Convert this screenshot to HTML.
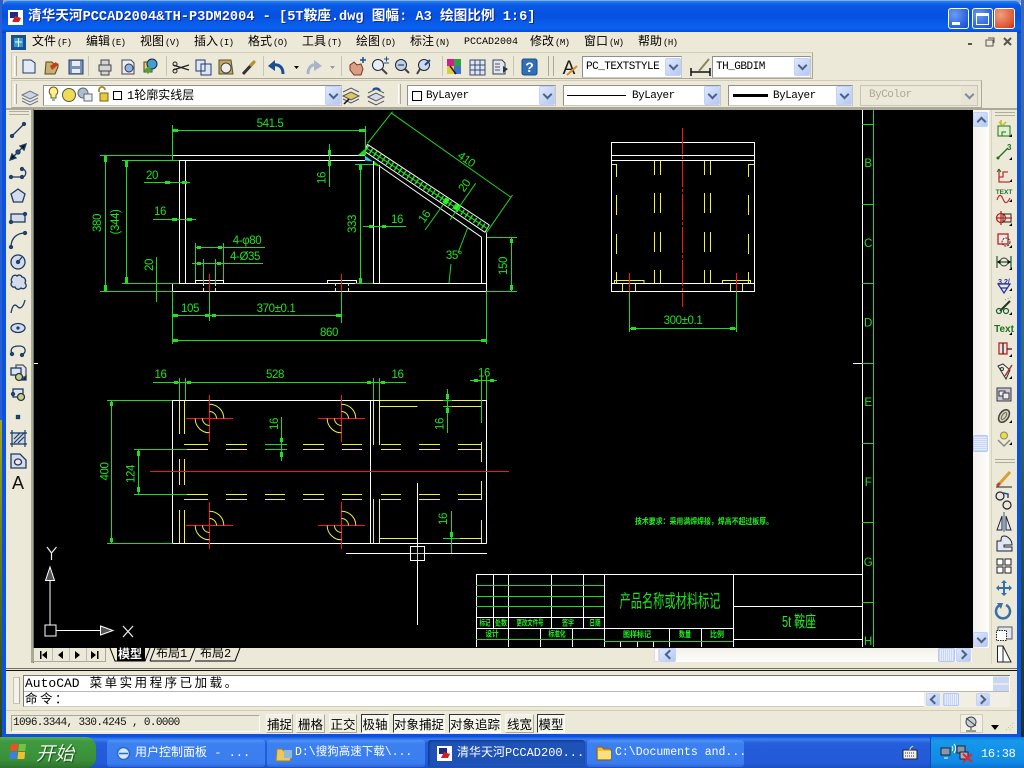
<!DOCTYPE html>
<html><head><meta charset="utf-8"><style>
html,body{margin:0;padding:0;background:#000}
#p{position:relative;width:1024px;height:768px;overflow:hidden;background:#ece9d8;font-family:"Liberation Sans","Noto Sans CJK SC",sans-serif;font-size:12px;color:#000}
#p div{position:absolute;box-sizing:border-box}
#p span.t{position:absolute;white-space:nowrap;line-height:1}
.m{top:36px;font-size:12px;font-family:"Liberation Mono","Noto Sans CJK SC",monospace}
.m i{font-style:normal;font-size:9px;letter-spacing:-.6px;margin-left:1px}
.bar{background:#ece9d8;border:1px solid #d0ccb8;border-right-color:#aca899;border-bottom-color:#aca899}
.cb{background:#fff;border:1px solid #8e8f8f;border-right-color:#c8c8c0;border-bottom-color:#c8c8c0}
.ar{background:linear-gradient(135deg,#dfe8fc,#b4c8f5);border:1px solid #c3d2f4;border-radius:2px}
.ar:after{content:"";position:absolute;left:50%;top:50%;width:5px;height:5px;margin:-5px 0 0 -3px;border-right:2px solid #4d6185;border-bottom:2px solid #4d6185;transform:rotate(45deg)}
.ar.u:after{transform:rotate(225deg);margin:-2px 0 0 -3px}
.ar.l:after{transform:rotate(135deg);margin:-4px 0 0 -2px}
.ar.rr:after{transform:rotate(-45deg);margin:-4px 0 0 -5px}
.th{background:repeating-linear-gradient(90deg,#c8d6f8 0,#c8d6f8 1px,#e4ecfd 1px,#e4ecfd 2px);border:1px solid #b4c8f0;border-radius:2px}
.sb{font-family:"Noto Sans CJK SC",sans-serif;font-size:12.5px;text-align:center;line-height:17px;height:19px;top:714px;background:#f2f0e4;border:1px solid #f8f7ef;border-right-color:#aca899;border-bottom-color:#aca899;letter-spacing:0;white-space:nowrap;overflow:hidden}
.on{background:#f7f6ee;border:1px solid #fff;border-top-color:#333;border-left-color:#333}
.tb{top:740px;height:27px;border-radius:3px;color:#fff;font-size:12px;line-height:26px;background:linear-gradient(180deg,#4e93f6 0,#3c80f0 15%,#3a7df0 85%,#2f66d8 100%);font-family:"Liberation Mono","Noto Sans CJK SC",monospace;white-space:nowrap}
</style></head><body><div id="p">

<!-- wallpaper edges -->
<div style="left:0;top:0;width:1024px;height:3px;background:#8fa8d8"></div>
<div style="left:0;top:0;width:3px;height:420px;background:#2a5fd0"></div>
<div style="left:0;top:420px;width:3px;height:320px;background:linear-gradient(180deg,#a0a820,#4a6a20 60%,#26401a)"></div>
<div style="left:1021px;top:0;width:3px;height:740px;background:linear-gradient(180deg,#3a6ab8,#3a6a60 50%,#20301a)"></div>

<!-- window -->
<div style="left:2px;top:1px;width:1019px;height:737px;background:#0a52e4;border-radius:7px 7px 0 0"></div>
<div style="left:2px;top:1px;width:1019px;height:32px;border-radius:7px 7px 0 0;background:linear-gradient(180deg,#1e86f5 0,#0a5be6 12%,#0550e0 45%,#0a62f0 85%,#0553e0 94%,#0342c8 100%)"></div>
<span class="t" style="left:28px;top:11px;font-size:13.65px;font-weight:bold;color:#fff;font-family:'Liberation Mono','Noto Sans CJK SC',monospace;text-shadow:1px 1px 0 #0a2a90">清华天河PCCAD2004&amp;TH-P3DM2004 - [5T鞍座.dwg 图幅: A3 绘图比例 1:6]</span>
<div style="left:6px;top:32px;width:1011px;height:702px;background:#ece9d8"></div>

<!-- title buttons -->
<div style="left:948px;top:8px;width:21px;height:21px;border:1px solid #fff;border-radius:3px;background:radial-gradient(circle at 30% 30%,#6a9cf5,#2a5fe0 70%,#1d47c0)"></div>
<div style="left:952px;top:22px;width:8px;height:3px;background:#fff"></div>
<div style="left:972px;top:8px;width:21px;height:21px;border:1px solid #fff;border-radius:3px;background:radial-gradient(circle at 30% 30%,#6a9cf5,#2a5fe0 70%,#1d47c0)"></div>
<div style="left:976px;top:13px;width:13px;height:12px;border:1px solid #fff;border-top-width:3px"></div>
<div style="left:994px;top:8px;width:21px;height:21px;border:1px solid #fff;border-radius:3px;background:radial-gradient(circle at 30% 30%,#f0a080,#de5530 70%,#b83010)"></div>

<!-- toolbars back -->
<div class="bar" style="left:11px;top:52px;width:802px;height:27px"></div>
<div class="bar" style="left:11px;top:80px;width:971px;height:28px"></div>
<div style="left:6px;top:108px;width:1011px;height:2px;background:#aca899"></div>

<!-- menu text -->
<span class="t m" style="left:32px">文件<i>(F)</i></span>
<span class="t m" style="left:86px">编辑<i>(E)</i></span>
<span class="t m" style="left:140px">视图<i>(V)</i></span>
<span class="t m" style="left:194px">插入<i>(I)</i></span>
<span class="t m" style="left:248px">格式<i>(O)</i></span>
<span class="t m" style="left:302px">工具<i>(T)</i></span>
<span class="t m" style="left:356px">绘图<i>(D)</i></span>
<span class="t m" style="left:410px">标注<i>(N)</i></span>
<span class="t m" style="left:464px;top:38px;font-size:10px">PCCAD2004</span>
<span class="t m" style="left:530px">修改<i>(M)</i></span>
<span class="t m" style="left:584px">窗口<i>(W)</i></span>
<span class="t m" style="left:638px">帮助<i>(H)</i></span>

<!-- combos -->
<div class="cb" style="left:582px;top:56px;width:100px;height:22px"></div>
<span class="t" style="left:586px;top:62px;font-family:'Liberation Mono',monospace;font-size:11px;letter-spacing:-.5px">PC_TEXTSTYLE</span>
<div class="ar" style="left:665px;top:58px;width:16px;height:18px"></div>
<div class="cb" style="left:712px;top:56px;width:99px;height:22px"></div>
<span class="t" style="left:716px;top:62px;font-family:'Liberation Mono',monospace;font-size:11px;letter-spacing:-.5px">TH_GBDIM</span>
<div class="ar" style="left:794px;top:58px;width:16px;height:18px"></div>

<div class="cb" style="left:43px;top:85px;width:299px;height:21px"></div>
<span class="t" style="left:127px;top:90px;font-size:12px;font-family:'Liberation Mono','Noto Sans CJK SC',monospace">1轮廓实线层</span>
<div class="ar" style="left:325px;top:86px;width:16px;height:19px"></div>
<div class="cb" style="left:407px;top:85px;width:149px;height:21px"></div>
<span class="t" style="left:426px;top:91px;font-family:'Liberation Mono',monospace;font-size:11px;letter-spacing:-.5px">ByLayer</span>
<div class="ar" style="left:539px;top:86px;width:16px;height:19px"></div>
<div class="cb" style="left:563px;top:85px;width:158px;height:21px"></div>
<div style="left:567px;top:95px;width:59px;height:1px;background:#000"></div>
<span class="t" style="left:632px;top:91px;font-family:'Liberation Mono',monospace;font-size:11px;letter-spacing:-.5px">ByLayer</span>
<div class="ar" style="left:704px;top:86px;width:16px;height:19px"></div>
<div class="cb" style="left:728px;top:85px;width:125px;height:21px"></div>
<div style="left:733px;top:94px;width:35px;height:3px;background:#000"></div>
<span class="t" style="left:773px;top:91px;font-family:'Liberation Mono',monospace;font-size:11px;letter-spacing:-.5px">ByLayer</span>
<div class="ar" style="left:836px;top:86px;width:16px;height:19px"></div>
<div style="left:860px;top:85px;width:118px;height:21px;border:1px solid #c8c5b4;background:#ece9d8"></div>
<span class="t" style="left:869px;top:90px;font-family:'Liberation Mono',monospace;font-size:11px;letter-spacing:-.5px;color:#aca899">ByColor</span>
<div class="ar" style="left:961px;top:86px;width:16px;height:19px;background:#e6e3d4;border-color:#e6e3d4;opacity:.7"></div>

<!-- canvas -->
<div style="left:34px;top:110px;width:939px;height:538px;background:#000"></div>
<div style="left:31px;top:109px;width:3px;height:554px;background:#aca899;border-right:1px solid #716f64"></div>
<!-- v scrollbar -->
<div style="left:973px;top:110px;width:16px;height:538px;background:linear-gradient(90deg,#f3f1ea,#fdfdfb)"></div>
<div class="ar u" style="left:973px;top:112px;width:15px;height:15px"></div>
<div class="ar" style="left:973px;top:632px;width:15px;height:15px"></div>
<div class="th" style="left:973px;top:435px;width:15px;height:17px;background:repeating-linear-gradient(180deg,#c8d6f8 0,#c8d6f8 1px,#e4ecfd 1px,#e4ecfd 2px)"></div>
<div style="left:991px;top:110px;width:1px;height:554px;background:#d6d3c2"></div>
<!-- h scrollbar -->
<div style="left:654px;top:648px;width:318px;height:14px;background:linear-gradient(180deg,#f3f1ea,#fdfdfb)"></div>
<div class="ar l" style="left:659px;top:648px;width:17px;height:14px"></div>
<div style="left:654px;top:648px;width:5px;height:14px;background:#fbfaf5;border:1px solid #ddd"></div>
<div class="th" style="left:938px;top:648px;width:17px;height:14px"></div>
<div class="ar rr" style="left:956px;top:648px;width:15px;height:14px"></div>
<!-- nav -->
<div style="left:33px;top:648px;width:73px;height:14px;background:#ece9d8;border:1px solid #aca899;border-top:0"></div>

<!-- tabs text -->
<span class="t" style="left:117px;top:648px;font-size:12px;font-weight:bold;color:#fff;background:#000;padding:0 3px 1px 1px;font-family:'Noto Sans CJK SC',sans-serif">模型</span>
<span class="t" style="left:156px;top:648px;font-size:12px;font-family:'Liberation Mono','Noto Sans CJK SC',monospace">布局1</span>
<span class="t" style="left:200px;top:648px;font-size:12px;font-family:'Liberation Mono','Noto Sans CJK SC',monospace">布局2</span>

<!-- command -->
<div style="left:6px;top:668px;width:1011px;height:3px;border-top:1px solid #716f64;border-bottom:1px solid #111"></div>
<div style="left:6px;top:671px;width:1011px;height:39px;background:#ece9d8"></div>
<div style="left:13px;top:677px;width:7px;height:27px;border:1px solid #c8c5b4;border-right-color:#aca899;background:#f5f3e8"></div>
<div style="left:23px;top:675px;width:987px;height:32px;background:#fff;border:1px solid #777;border-right:0;border-bottom:1px solid #d0ccb8"></div>
<div style="left:24px;top:691px;width:985px;height:1px;background:#b8b8b0"></div>
<span class="t" style="left:25px;top:677px;font-size:13px;font-family:'Liberation Mono','Noto Sans CJK SC',monospace">AutoCAD<span style="margin-left:10px;font-size:12.5px;letter-spacing:2.5px">菜单实用程序已加载。</span></span>
<span class="t" style="left:25px;top:694px;font-size:12.5px;letter-spacing:2.5px;font-family:'Liberation Mono','Noto Sans CJK SC',monospace">命令：</span>
<div style="left:993px;top:676px;width:16px;height:15px;background:#ece9d8"></div>
<div style="left:993px;top:677px;width:16px;height:6px;background:#c8d6f8"></div>
<div style="left:993px;top:685px;width:16px;height:6px;background:#c8d6f8"></div>
<div style="left:924px;top:692px;width:86px;height:15px;background:#f1efe4"></div>
<div class="ar l" style="left:926px;top:693px;width:14px;height:13px"></div>
<div class="th" style="left:943px;top:693px;width:16px;height:13px"></div>
<div class="ar rr" style="left:976px;top:693px;width:14px;height:13px"></div>

<!-- status -->
<div style="left:6px;top:710px;width:1011px;height:24px;background:#ece9d8;border-top:1px solid #d0ccb8"></div>
<div style="left:11px;top:715px;width:249px;height:17px;background:#ece9d8;border:1px solid #aca899;border-right-color:#fff;border-bottom-color:#fff"></div>
<span class="t" style="left:13px;top:718px;font-size:11px;font-family:'Liberation Mono',monospace;letter-spacing:-.65px;color:#111">1096.3344, 330.4245 , 0.0000</span>
<div class="sb" style="left:266px;width:27px">捕捉</div>
<div class="sb" style="left:296px;width:29px">栅格</div>
<div class="sb" style="left:329px;width:28px">正交</div>
<div class="sb on" style="left:361px;width:28px">极轴</div>
<div class="sb on" style="left:393px;width:52px">对象捕捉</div>
<div class="sb on" style="left:449px;width:52px">对象追踪</div>
<div class="sb" style="left:505px;width:29px">线宽</div>
<div class="sb on" style="left:537px;width:28px">模型</div>
<div style="left:960px;top:714px;width:23px;height:19px;background:#f3f1e6;border:1px solid #d0ccb8"></div>
<div style="left:991px;top:725px;width:0;height:0;border:4px solid transparent;border-top:5px solid #000"></div>

<!-- taskbar -->
<div style="left:0;top:737px;width:1024px;height:31px;background:linear-gradient(180deg,#1f5ad8 0,#3c80ef 8%,#245edb 20%,#2359d6 85%,#1c4fc0 100%)"></div>
<div style="left:0;top:737px;width:96px;height:31px;border-radius:0 10px 10px 0;background:linear-gradient(180deg,#5aa85a 0,#3f9a3f 15%,#3a8f3a 75%,#2d722d 100%)"></div>
<span class="t" style="left:36px;top:743px;font-size:19px;font-style:italic;color:#e8f4e8;font-family:'Noto Sans CJK SC',sans-serif;text-shadow:1px 1px 1px #1c4c1c">开始</span>
<div class="tb" style="left:107px;width:158px;padding-left:28px">用户控制面板 - ...</div>
<div class="tb" style="left:267px;width:158px;padding-left:28px;font-size:11.5px">D:\搜狗高速下载\...</div>
<div class="tb" style="left:428px;width:157px;padding-left:29px;background:#1e52b7;box-shadow:inset 1px 1px 2px #12367f">清华天河PCCAD200...</div>
<div class="tb" style="left:587px;width:157px;padding-left:28px;font-size:11.5px">C:\Documents and...</div>
<div style="left:930px;top:737px;width:94px;height:31px;background:linear-gradient(180deg,#0f7fdc 0,#1798ea 12%,#0f8ae6 80%,#0d70cf 100%);border-left:1px solid #0a4aa8"></div>
<span class="t" style="left:981px;top:748px;font-size:12px;color:#fff;font-family:'Liberation Mono',monospace;letter-spacing:-.3px">16:38</span>

<svg width="1024" height="768" viewBox="0 0 1024 768" style="position:absolute;left:0;top:0" fill="none">
<style>
.d{font-family:"Liberation Sans","Noto Sans CJK SC",sans-serif;font-size:11.5px;letter-spacing:-.4px;fill:#20e020;text-anchor:middle;dominant-baseline:central}
.s{font-family:"Noto Sans CJK SC",sans-serif;font-size:8px;font-weight:bold;fill:#20f020;text-anchor:middle;dominant-baseline:central}
.w{stroke:#fff;stroke-width:1;shape-rendering:crispEdges}
.g{stroke:#20d820;stroke-width:1;shape-rendering:crispEdges}
.y{stroke:#f0f040;stroke-width:1;shape-rendering:crispEdges}
.r{stroke:#ff1414;stroke-width:1;shape-rendering:crispEdges}
.a{stroke:#20e020;stroke-width:3;shape-rendering:crispEdges}
.i{stroke:#1c3c64;stroke-width:1.3}
.n{stroke:#1c3c64;fill:#d4dcec}
.dot{fill:#1c5080}
</style>

<!-- ===== CAD: FRONT VIEW ===== -->
<path class="w" d="M172.5 155.5H365M172.5 160.5H365M179.5 160V283M185.5 160V283M172.5 283.5H486.5M172.5 291.5H486.5M172.5 283V291.5M486.5 232V291.5M481.5 237V283M373.5 161V283M379.5 165V283M195.5 280.5H223.5M195.5 280V283M223.5 280V283M327.5 280.5H356.5M327.5 280V283M356.5 280V283"/>
<path stroke="#fff" d="M367.3 144.3L489.3 225M365 151.7L485 232.3M374 162.3L481.7 237.3M367.3 144.3L365 151.7M489.3 225L485 232.3"/>
<path stroke="#22e022" stroke-width="6" stroke-dasharray="1.5 3.5" d="M366.2 148L487.2 228.6"/>
<path stroke="#22e022" stroke-width="1" d="M366.2 148L487.2 228.6"/>
<path stroke="#22ff22" stroke-width="6" d="M444 199.7L448 202.4M455.3 206.3L459.3 209"/>
<path fill="#20d8f0" d="M365 155.5L373 161.5L365 160.5Z"/>
<path fill="#20d820" d="M357.3 155.5L365 149L365 155.5Z"/>
<path fill="#20d820" d="M374 161L381 167L374 165Z"/>
<path class="y" stroke-dasharray="3 2" d="M203.5 283V291M215.5 283V291M335.5 283V291M348.5 283V291"/>
<path class="r" d="M209.5 274V291M341.5 274V291"/>
<path class="g" d="M172.5 125V160M365.5 126V155M172.5 130.5H365M100 155.5H172M105.5 155.5V291M100 291.5H172M122 160.5H179M126.5 160.5V283M122 283.5H179M144 182.5H190M153 219.5H196M195.5 243V280M223.5 243V280M195 247.5H265M192 263.5H263M203.5 259V283M215.5 259V283M156.5 257V302M172.5 291V344M209.5 291V321M341.5 291V323M486.5 291V344M172.5 315.5H341.5M172.5 340.5H486.5M360.5 164V283M355 164.5H373M355 283.5H373M363 226.5H406M329.5 144V187M511.5 237V291M487 237.5H517M487 291.5H517"/>
<path stroke="#20d820" d="M391.7 113.3L510.5 197M367.5 143.3L392.5 111.7M486 233.3L512.5 195M450 220L475.7 183.3M425 230L443 205M468 227L458 253M451 264L449 283"/>
<path class="a" d="M172 130.5h6M359 130.5h6M105.5 156v6M105.5 285v6M126.5 161v6M126.5 277v6M165 182.5h5M182 182.5h5M172 219.5h5M187 219.5h5M197 247.5h4M218 247.5h4M197 263.5h4M217 263.5h4M173 315.5h5M205 315.5h4M212 315.5h4M336 315.5h5M173 340.5h5M481 340.5h5M360.5 165v5M360.5 278v5M369 226.5h4M382 226.5h4M329.5 150v5M329.5 161v5M511.5 239v4M511.5 285v5"/>
<text class="d" x="270" y="124">541.5</text>
<text class="d" transform="rotate(-90 98 223)" x="98" y="223">380</text>
<text class="d" transform="rotate(-90 116 222)" x="116" y="222">(344)</text>
<text class="d" x="152" y="176">20</text>
<text class="d" x="160" y="212">16</text>
<text class="d" x="247" y="241">4-φ80</text>
<text class="d" x="245" y="257">4-Ø35</text>
<text class="d" transform="rotate(-90 150 265)" x="150" y="265">20</text>
<text class="d" x="190" y="309">105</text>
<text class="d" x="276" y="309">370±0.1</text>
<text class="d" x="329" y="333">860</text>
<text class="d" transform="rotate(-90 353 224)" x="353" y="224">333</text>
<text class="d" x="397" y="220">16</text>
<text class="d" transform="rotate(-90 322.5 178)" x="322.5" y="178">16</text>
<text class="d" transform="rotate(-90 504 266)" x="504" y="266">150</text>
<text class="d" transform="rotate(35 466 160)" x="466" y="160">410</text>
<text class="d" transform="rotate(-55 465 186)" x="465" y="186">20</text>
<text class="d" transform="rotate(-55 425 217)" x="425" y="217">16</text>
<text class="d" x="454" y="256">35°</text>

<!-- ===== CAD: TOP VIEW ===== -->
<path class="w" d="M172.5 400.5H486.5M172.5 543.5H486.5M172.5 400V543.5M486.5 400V543.5M370.5 400V543.5"/>
<path class="y" d="M179.5 401V434M184.5 401V434M179.5 459V485M184.5 459V485M179.5 510V543M184.5 510V543M373.5 401V445M379.5 401V445M373.5 499V543M379.5 499V543M481.5 401V423M481.5 442V462M481.5 481V500M481.5 520V543M380 400.5H481M380 406.5H417.5M452 406.5H481.5M380 538.5H417M452 538.5H481.5"/>
<path class="y" d="M184 444.5H208M184 449.5H208M226 444.5H247M226 449.5H247M265 444.5H285M265 449.5H285M303 444.5H324M303 449.5H324M342 444.5H362M342 449.5H362M381 444.5H401M381 449.5H401M419 444.5H440M419 449.5H440M458 444.5H481.5M458 449.5H481.5M184 494.5H208M184 499.5H208M226 494.5H247M226 499.5H247M265 494.5H285M265 499.5H285M303 494.5H324M303 499.5H324M342 494.5H362M342 499.5H362M381 494.5H401M381 499.5H401M419 494.5H440M419 499.5H440M458 494.5H481.5M458 499.5H481.5"/>
<path class="r" d="M150 471.5H509M186 418.5H233M209.5 395V442M318 418.5H365M341.5 395V442M186 525.5H233M209.5 502V549M318 525.5H365M341.5 502V549"/>
<path stroke="#f0f040" d="M209.5 404.2A14.3 14.3 0 0 1 223.8 418.5M209.5 411.5A7 7 0 0 1 216.5 418.5M195.2 418.5A14.3 14.3 0 0 0 209.5 432.8M202.5 418.5A7 7 0 0 0 209.5 425.5M341.5 404.2A14.3 14.3 0 0 1 355.8 418.5M341.5 411.5A7 7 0 0 1 348.5 418.5M327.2 418.5A14.3 14.3 0 0 0 341.5 432.8M334.5 418.5A7 7 0 0 0 341.5 425.5M209.5 511.2A14.3 14.3 0 0 1 223.8 525.5M209.5 518.5A7 7 0 0 1 216.5 525.5M195.2 525.5A14.3 14.3 0 0 0 209.5 539.8M202.5 525.5A7 7 0 0 0 209.5 532.5M341.5 511.2A14.3 14.3 0 0 1 355.8 525.5M341.5 518.5A7 7 0 0 1 348.5 525.5M327.2 525.5A14.3 14.3 0 0 0 341.5 539.8M334.5 525.5A7 7 0 0 0 341.5 532.5"/>
<path class="g" d="M153 382.5H406M179.5 378V400M185.5 378V400M373.5 378V400M379.5 378V400M470 380.5H497M481.5 376V423M486.5 376V400M107 400.5H172M111.5 400.5V543M107 543.5H172M134 449.5H187M138.5 449.5V494M134 494.5H187M281.5 417V461M447.5 389V433M451.5 511V554M443 538.5H460M265 444.5H287M265 449.5H287M443 406.5H452M443 400.5H452"/>
<path class="a" d="M174 382.5h4M187 382.5h4M367 382.5h4M381 382.5h4M474 380.5h4M490 380.5h4M111.5 402v4M111.5 538v4M138.5 451v5M138.5 487v5M281.5 438v4M281.5 452v5M447.5 394v5M447.5 408v5M451.5 532v5"/>
<text class="d" x="160.5" y="375">16</text>
<text class="d" x="275" y="375">528</text>
<text class="d" x="397.5" y="375">16</text>
<text class="d" x="484" y="373.5">16</text>
<text class="d" transform="rotate(-90 105.5 471.5)" x="105.5" y="471.5">400</text>
<text class="d" transform="rotate(-90 131.5 474)" x="131.5" y="474">124</text>
<text class="d" transform="rotate(-90 275 424)" x="275" y="424">16</text>
<text class="d" transform="rotate(-90 440.5 424)" x="440.5" y="424">16</text>
<text class="d" transform="rotate(-90 444 519)" x="444" y="519">16</text>

<!-- crosshair -->
<path class="w" d="M417.5 483V546M417.5 561V625M346 553.5H410M425 553.5H487M410.5 546.5H424.5V560.5H410.5ZM34 363.5H38M853 363.5H862"/>
<path class="w" d="M417.5 546V561M410 553.5H425" opacity=".8"/>

<!-- ===== CAD: SIDE VIEW ===== -->
<path class="w" d="M611.5 142.5H754.5V291.5H611.5ZM611.5 155.5H754.5M611.5 160.5H754.5M611.5 283.5H754.5"/>
<path class="y" d="M654.5 161V175M660.5 161V175M704.5 161V175M710.5 161V175M654.5 193V213M660.5 193V213M704.5 193V213M710.5 193V213M654.5 232V252M660.5 232V252M704.5 232V252M710.5 232V252M654.5 270V283M660.5 270V283M704.5 270V283M710.5 270V283M611.5 164.5H616.5V177M616.5 195V215M616.5 234V254M616.5 272V283M754.5 164.5H748.5V177M748.5 195V215M748.5 234V254M748.5 272V283M614.5 283V280.5H644V283M722.5 283V280.5H750.5V283M622.5 283V291M635.5 283V291M730.5 283V291M742.5 283V291"/>
<path class="r" stroke-dasharray="26 2 3 2" d="M682.5 128V307"/>
<path class="r" d="M629.5 273V291M736.5 273V291"/>
<path class="g" d="M629.5 291V332M736.5 291V332M629.5 328.5H736.5"/>
<path class="a" d="M631 328.5h5M730 328.5h5"/>
<text class="d" x="683" y="321">300±0.1</text>

<!-- ===== BORDER ===== -->
<path class="w" d="M862.5 110V647"/>
<path class="g" d="M873.5 110V647M862 124.5H874M862 204.5H874M862 283.5H874M862 363.5H874M862 443.5H874M862 522.5H874M862 602.5H874"/>
<text class="d" x="868" y="164">B</text><text class="d" x="868" y="244">C</text><text class="d" x="868" y="323.5">D</text><text class="d" x="868" y="403">E</text><text class="d" x="868" y="483">F</text><text class="d" x="868" y="563">G</text><text class="d" x="868" y="642">H</text>

<!-- ===== TITLE BLOCK ===== -->
<path class="w" d="M476.5 574.5H862M476.5 574V647M493.5 574V628M508.5 574V647M551.5 574V617M583.5 574V628M604.5 574V647M733.5 574V647M476 617.5H604M476 628.5H733M733 606.5H862M733 639.5H862M540.5 628V647M572.5 628V647M551.5 617V628M669.5 628V647M701.5 628V647"/>
<path class="g" d="M476 585.5H604M476 596.5H604M476 606.5H604M476 639.5H604M604 641.5H733"/>
<path class="w" d="M620.5 642V647M637.5 642V647M653.5 642V647"/>
<text x="670" y="601.5" class="d" style="font-size:18px;letter-spacing:0" textLength="101" lengthAdjust="spacingAndGlyphs">产品名称或材料标记</text>
<text x="799" y="622.5" class="d" style="font-size:16px;letter-spacing:0;fill:#22f022" textLength="34" lengthAdjust="spacingAndGlyphs">5t 鞍座</text>
<text x="704" y="521.5" class="s" textLength="138" lengthAdjust="spacingAndGlyphs">技术要求：采用满焊焊接，焊高不超过板厚。</text>
<text class="s" x="485" y="623" textLength="11" lengthAdjust="spacingAndGlyphs">标记</text>
<text class="s" x="501" y="623" textLength="12" lengthAdjust="spacingAndGlyphs">处数</text>
<text class="s" x="530" y="623" textLength="27" lengthAdjust="spacingAndGlyphs">更改文件号</text>
<text class="s" x="568" y="623" textLength="12" lengthAdjust="spacingAndGlyphs">签字</text>
<text class="s" x="595" y="623" textLength="11" lengthAdjust="spacingAndGlyphs">日期</text>
<text class="s" x="492" y="634" textLength="13" lengthAdjust="spacingAndGlyphs">设计</text>
<text class="s" x="557" y="634" textLength="17" lengthAdjust="spacingAndGlyphs">标准化</text>
<text class="s" x="637" y="634.5" textLength="28" lengthAdjust="spacingAndGlyphs">图样标记</text>
<text class="s" x="685" y="634.5" textLength="12" lengthAdjust="spacingAndGlyphs">数量</text>
<text class="s" x="717" y="634.5" textLength="14" lengthAdjust="spacingAndGlyphs">比例</text>

<!-- UCS -->
<path stroke="#fff" d="M45 625.5V625h11v11H45ZM50 625V581M56 630.5H100"/>
<path stroke="#fff" d="M45.5 580.5H54.5L50 567ZM100.5 626V635L113 630.5Z" fill="#555"/>
<path stroke="#eee" stroke-width="1.2" d="M47 547L51.500 553L56.500 547M51.500 553V560M123 626L133 637M133 626L123 637"/>

<!-- nav glyphs -->
<g fill="#000"><path d="M40 651h1.500v8H40ZM47 651v8l-5-4ZM63 651v8l-5-4ZM75 651v8l5-4ZM91 651v8l5-4ZM97 651h1.500v8H97Z"/><path stroke="#bbb" d="M52.500 648V662M69.500 648V662M86.500 648V662" fill="none"/></g>
<!-- tabs outline -->
<path stroke="#000" d="M110 648L115 661H145L150 648M150 661L155 648M190 661H155M190 661L195 648M195 661H235L240 648M150 661H155"/>

<!-- MENU ICON -->
<rect x="11" y="35" width="15" height="15" fill="#1b4f8e"/><path d="M14 38h9v9h-9z" fill="#2f9fd8"/><path stroke="#fff" d="M18.500 38v9M15 42h7"/>
<!-- MDI -->
<path stroke="#555" d="M968 44h4" stroke-width="2"/><path stroke="#555" d="M986 40h7v6h-7zM988 38h6v5" fill="none"/><path stroke="#555" stroke-width="2" d="M1004 38l7 7M1011 38l-7 7"/>

<!-- TITLE ICON -->
<rect x="8" y="10" width="15" height="15" fill="#fff"/><path d="M10 12h8v6h-8z" fill="#222a80"/><path d="M15 16l6 2-2 4h-7z" fill="#d02020"/><path stroke="#fff" d="M12 18v5"/>
<!-- grips -->
<path stroke="#fff" d="M14.500 56V76M14.500 84V104M341 84M398.500 84V104"/><path stroke="#aca899" d="M16.500 56V76M16.500 84V104M400.500 84V104M548.500 56V76M553.500 56V76"/>
<path stroke="#c8c5b4" d="M88.500 56V76M166.500 56V76M263.500 56V76M341.500 56V76M442.500 56V76M513.500 56V76"/>

<!-- TOOLBAR 1 ICONS -->
<path fill="#e4eaf5" stroke="#1f3c6a" d="M23 60H31L35 63V73H23Z"/>
<path fill="#c8b070" stroke="#5a4a20" d="M46 62h6l2 2h4v3l-3 7H45Z"/><path fill="#c04020" d="M50 66l6-4 2 3-6 5z"/>
<path fill="#7a92b8" stroke="#1f3c6a" d="M69 60h14v14H69Z"/><path fill="#e8ecf4" d="M72 61h8v5h-8zM72 69h8v4h-8z"/>
<path fill="#d4d4d8" stroke="#444" d="M99 65h12v6H99ZM101 60h8v5h-8zM101 71h8v4h-8z"/>
<path fill="#eee" stroke="#445" d="M122 60h9l3 3v11h-12Z"/><circle cx="129" cy="68" r="4" fill="#8fb4e0" stroke="#335"/>
<path fill="#e8d060" stroke="#443" d="M144 62h8v10h-8z"/><circle cx="152" cy="64" r="5" fill="#3fa0d0" stroke="#224"/><path fill="#50a040" d="M144 70l5-4 3 4-4 4z"/>
<path stroke="#222" stroke-width="1.200" d="M173 65L189 70M173 70L189 65"/><circle cx="175" cy="64" r="2" stroke="#222"/><circle cx="175" cy="71" r="2" stroke="#222"/>
<path fill="#dce6f5" stroke="#1f3c6a" d="M196 60h9v11h-9zM201 64h10v11h-10z"/>
<path fill="#c8a858" stroke="#553" d="M219 60h12l2 14h-14z"/><circle cx="226" cy="68" r="5" fill="#eee" stroke="#444"/>
<path stroke="#333" stroke-width="3" d="M243 74L254 62"/><path stroke="#c09030" stroke-width="3" d="M250 66l5-5"/>
<path stroke="#1c4d90" stroke-width="3" d="M283 74C283 66 278 64 272 65"/><path fill="#1c4d90" d="M275 60L268 66L275 71Z"/>
<path fill="#000" d="M294 66h5l-2.500 3z"/>
<path stroke="#aab4c8" stroke-width="3" d="M308 74C308 66 313 64 317 65"/><path fill="#aab4c8" d="M314 60L322 66L314 71Z"/><path fill="#999" d="M330 66h5l-2.500 3z"/>
<path fill="#d8a080" stroke="#733" d="M350 65l4-3 3 3 4-1 2 5-2 6h-7l-4-5z"/><path stroke="#1c4d90" stroke-width="1.500" d="M360 60h6M363 57v6"/>
<circle cx="378" cy="65" r="5.500" stroke="#223" fill="#e8eef8"/><path stroke="#444" stroke-width="2" d="M382 69l5 5"/><path stroke="#1c4d90" d="M384 59h5M386.500 56.500v5M384 63h5"/>
<circle cx="401" cy="65" r="5.500" stroke="#223" fill="#bcd0ee"/><path stroke="#444" stroke-width="2" d="M405 69l4 4"/><path stroke="#223" d="M398 65h6"/>
<circle cx="424" cy="65" r="5.500" stroke="#223" fill="#cddaf0"/><path stroke="#444" stroke-width="2" d="M420 69l-3 5"/><path stroke="#1c4d90" stroke-width="2" d="M430 60l-5 5"/>
<rect x="447" y="59" width="7" height="7" fill="#d02090"/><rect x="454" y="59" width="7" height="7" fill="#30a040"/><rect x="447" y="66" width="7" height="8" fill="#dccc40"/><rect x="454" y="66" width="7" height="8" fill="#4070d0"/><path stroke="#222" stroke-width="1.500" d="M450 66L456 74"/>
<rect x="470" y="60" width="15" height="15" fill="#dfe6f2" stroke="#3a4a70"/><path stroke="#3a4a70" d="M475 60V75M480 60V75M470 65H485M470 70H485"/>
<path fill="#dfe6f2" stroke="#345" d="M493 60h9l3 3v11h-12Z"/><path fill="#334" d="M503 66l5 3-5 4z"/><path stroke="#555" d="M495 64h5M495 67h5M495 70h5"/>
<rect x="522" y="59" width="15" height="16" rx="2" fill="#2f6fb5" stroke="#224a80"/><text x="529.500" y="72" font-family="Liberation Sans" font-size="14" font-weight="bold" fill="#fff" text-anchor="middle">?</text>
<text x="569" y="74" font-family="Liberation Sans" font-size="19" fill="#1a1a1a" text-anchor="middle">A</text><path stroke="#d09030" stroke-width="2" d="M567 75l10-9"/>
<path stroke="#111" stroke-width="1.500" d="M691 72H710M691 68V76M710 68V76"/><path stroke="#885" stroke-width="2" d="M699 71L709 59"/>

<!-- TOOLBAR 2 ICONS -->
<g stroke="#6a7890" fill="#ccd4e2"><path d="M22 95l8-4 8 4-8 4z"/><path d="M22 98l8 4 8-4" fill="none"/><path d="M22 101l8 4 8-4" fill="none"/></g>
<path fill="#ffee88" stroke="#5a5a20" d="M53 87a4.500 4.500 0 0 1 3 8v3h-5v-3a4.500 4.500 0 0 1 2-8z"/><path stroke="#555" d="M52 100h3"/>
<circle cx="69" cy="95" r="6.500" fill="#eedd50" stroke="#555"/>
<circle cx="83" cy="93" r="5" fill="#a8c0c8" stroke="#667"/><rect x="84" y="94" width="8" height="7" fill="#e8ecf0" stroke="#667"/>
<path stroke="#a8861e" stroke-width="1.800" d="M99 92v-2a3 3 0 0 1 6 0"/><rect x="100" y="93" width="8" height="8" fill="#e8c840" stroke="#7a6010"/>
<rect x="113.500" y="91.500" width="8" height="8" fill="#fff" stroke="#000"/>
<g transform="translate(351 95)"><path fill="#dcc860" stroke="#556" d="M-8 1l8-4 8 4-8 4z"/><path stroke="#556" d="M-8-3l8-4 8 4M-8 4l8 4 8-4"/><path stroke="#111" stroke-width="1.500" d="M-7 9l5-5"/></g>
<g transform="translate(376 95)"><path fill="#d4dae6" stroke="#556" d="M-8 2l8-4 8 4-8 4z"/><path stroke="#556" d="M-8-2l8-4 8 4M-8 6l8 4 8-4"/><path stroke="#1c4d90" stroke-width="2" d="M-3-5a4 4 0 0 1 7 1"/></g>
<rect x="412.500" y="91.500" width="9" height="9" fill="#fff" stroke="#000"/>

<!-- LEFT TOOLBAR -->
<path stroke="#b0ad9c" d="M9 111.500H29M9 114.500H29"/>
<g class="i">
<path class="i" d="M12 136L24 124"/><circle class="dot" cx="12" cy="136" r="1.500"/><circle class="dot" cx="24" cy="124" r="1.500"/>
<path class="i" stroke-width="1.500" d="M10 160L26 144"/><path fill="#111" d="M10 160l6-2-4-4zM26 144l-6 2 4 4z"/><circle class="dot" cx="18" cy="152" r="2"/>
<path class="i" d="M11 177H22C27 177 27 169 22 169"/><circle class="dot" cx="11" cy="177" r="1.500"/><circle class="dot" cx="22" cy="177" r="1.500"/><circle class="dot" cx="22" cy="169" r="1.500"/>
<path class="n" stroke-width="1.300" d="M18 189L25 194L22.500 202H13.500L11 194Z"/>
<rect class="n" x="11" y="214" width="14" height="8"/><circle class="dot" cx="11" cy="222" r="1.500"/><circle class="dot" cx="25" cy="214" r="1.500"/>
<path class="i" d="M11 247C11 238 17 233 25 233"/><circle class="dot" cx="11" cy="247" r="1.500"/><circle class="dot" cx="25" cy="233" r="1.500"/>
<circle class="n" cx="18" cy="262" r="7"/><path class="i" d="M18 262L22 257"/><circle class="dot" cx="18" cy="262" r="1.500"/>
<path class="n" d="M12 278a3 3 0 0 1 5-2 3 3 0 0 1 5 1 4 4 0 0 1 3 6 3 3 0 0 1-4 5 3.500 3.500 0 0 1-6-1 3 3 0 0 1-3-5 3 3 0 0 1 0-4z"/>
<path class="i" d="M11 313C13 302 16 305 18 307C20 309 23 308 25 300"/>
<ellipse class="n" cx="18" cy="328" rx="7" ry="4.500"/><circle class="dot" cx="18" cy="328" r="1"/>
<path class="i" d="M12 354C9 347 15 346 19 346C26 346 27 352 22 355"/><circle class="dot" cx="12" cy="354" r="1.500"/><circle class="dot" cx="22" cy="355" r="1.500"/>
<path fill="#e0e4ee" stroke="#555" d="M16 365h7l3 3v9h-10z"/><rect x="11" y="368" width="10" height="7" fill="#dbe2f0" stroke="#1c3c64"/><circle cx="19" cy="377" r="3.500" fill="#c4d090" stroke="#333"/><path fill="#111" d="M26 380v-4l-4 4z"/>
<rect x="13" y="389" width="10" height="8" fill="#dbe2f0" stroke="#1c3c64"/><circle cx="21" cy="397" r="3.500" fill="#c4d090" stroke="#333"/><circle class="dot" cx="13" cy="394" r="1.500"/>
<rect class="dot" x="16.500" y="415.500" width="3" height="3"/>
<path fill="#cfd5e2" stroke="none" d="M12 432h13v13h-13z"/><path stroke="#1c3c64" stroke-width="1.200" d="M10 433H27M10 444H27M12 430V447M25 430V447M14 443L24 433M14 439L20 433M18 443L24 437"/>
<path class="n" d="M11 454H20L26 460V468H11Z"/><ellipse cx="18" cy="462" rx="3.500" ry="3" stroke="#334" fill="#e8ecf4"/>
</g>
<text x="18" y="489" font-family="Liberation Sans" font-size="18" fill="#111" text-anchor="middle">A</text>

<!-- RIGHT TOOLBAR -->
<path stroke="#b0ad9c" d="M995 112.500H1015M995 115.500H1015M995 459.500H1015M995 462.500H1015"/>
<g fill="#000">
<path d="M1012 134v3h-3zM1012 157v3h-3zM1012 179v3h-3zM1012 199v3h-3zM1012 223v3h-3zM1012 245v3h-3zM1012 267v3h-3zM1012 288v3h-3zM1012 312v3h-3zM1012 332v3h-3zM1012 354v3h-3zM1012 376v3h-3zM1012 420v3h-3zM1012 442v3h-3z"/>
</g>
<rect x="998" y="126" width="12" height="10" fill="#dff0d0" stroke="#207020"/><path stroke="#c8b820" stroke-width="1.500" d="M999 122l3 3M1001 120v5M1003 125l3-3"/><path stroke="#207020" d="M1002 136v-4h4"/>
<path stroke="#207020" stroke-width="1.300" d="M998 158L1008 148"/><circle cx="998" cy="158" r="1.500" fill="#207020"/><text x="1007" y="150" font-size="8" font-weight="bold" fill="#207020" font-family="Liberation Sans">3</text>
<path stroke="#c03030" stroke-width="1.300" d="M999 169V182H1010M999 177H1003V172H1008"/><path stroke="#207020" d="M999 169l-2 3M999 169l2 3"/>
<text x="1004" y="194" font-size="6.500" font-weight="bold" fill="#207020" text-anchor="middle" font-family="Liberation Sans">TEXT</text><path stroke="#c03030" stroke-width="1.200" d="M997 200c2-6 4-6 6-1s4 5 7-1"/>
<circle cx="1001" cy="218" r="4.500" stroke="#c02020" stroke-width="1.300"/><rect x="1003" y="214" width="8" height="8" stroke="#222" fill="none"/><path stroke="#c02020" stroke-width="1.300" d="M996 218H1012M1001 211V225"/>
<rect x="998" y="234" width="10" height="10" stroke="#c02020" stroke-width="1.300" fill="#f4e8e4"/><circle cx="1006" cy="242" r="4" stroke="#333" stroke-dasharray="2 1"/>
<path stroke="#1c5e30" stroke-width="1.200" d="M997 256V268M1011 256V268M997 262H1011"/><circle cx="1004" cy="262" r="4" stroke="#333"/><path fill="#111" d="M997 262l3-2v4zM1011 262l-3-2v4z"/>
<text x="1004" y="284" font-size="7" font-weight="bold" fill="#2030a0" text-anchor="middle" font-family="Liberation Sans">3.2/</text><path stroke="#2030a0" stroke-width="1.200" d="M998 284H1010L1004 293ZM1001 288H1007"/>
<path stroke="#203820" stroke-width="2" d="M1000 311L1010 301"/><circle cx="999" cy="311" r="2.500" stroke="#1c5e30" stroke-width="1.200"/><circle cx="1006" cy="311" r="2.500" stroke="#1c5e30" stroke-width="1.200"/><path stroke="#888" stroke-dasharray="1 2" d="M1005 300l6-3"/>
<text x="1004" y="332" font-size="10" font-weight="bold" fill="#207020" text-anchor="middle" font-family="Liberation Sans">Text</text>
<rect x="999" y="343" width="8" height="11" fill="#f4e0e0" stroke="#c02020" stroke-width="1.300"/><path stroke="#222" stroke-width="1.300" d="M1003 343v11M1007 349h5"/>
<path fill="#f0f0e8" stroke="#333" d="M998 366L1003 364L1010 370L1006 379Z"/><path stroke="#b03030" stroke-width="1.500" d="M1005 376L1012 365"/><circle cx="1002" cy="369" r="1.500" stroke="#333"/>
<rect x="997" y="388" width="14" height="13" fill="#c8c8d4" stroke="#334"/><rect x="999" y="391" width="6" height="5" fill="#eee" stroke="#333"/><rect x="1003" y="393" width="6" height="6" fill="#eee" stroke="#333"/>
<ellipse cx="1004" cy="416" rx="4.500" ry="7" transform="rotate(35 1004 416)" stroke="#444" stroke-width="1.500" fill="#d8d4b0"/><ellipse cx="1004" cy="416" rx="1.800" ry="4" transform="rotate(35 1004 416)" stroke="#666"/>
<path fill="#e8e040" stroke="#887" d="M1004 432a3.500 3.500 0 0 1 0 7 3.500 3.500 0 0 1 0-7z"/><path stroke="#888" stroke-width="1.500" d="M998 440L1004 446L1010 440"/>
<path stroke="#c04040" stroke-width="3" d="M997 486L1000 483"/><path stroke="#d8a030" stroke-width="3" d="M1000 483L1010 472"/><path stroke="#222" d="M996 487H1012"/>
<circle cx="1000" cy="496" r="4" stroke="#223" stroke-width="1.200"/><circle cx="1007" cy="505" r="4" stroke="#223" stroke-width="1.200"/><path stroke="#1c4d90" stroke-width="1.500" d="M1003 493l5 1 0 4"/>
<path stroke="#2060a0" d="M1004 512V532"/><path stroke="#223" fill="#e0e8f4" d="M1002 516L997 530H1002ZM1006 516L1011 530H1006Z"/>
<path stroke="#223" fill="#e0e8f4" d="M1004 536c-3 0-3 3-3 5h-4v10h15v-4h-8v-2h8c0-5-4-9-8-9z"/>
<path stroke="#222" fill="#fff" d="M997 559h6v6h-6zM1005 559h6v6h-6zM997 567h6v6h-6zM1005 567h6v6h-6z"/>
<path fill="#3a6ea8" d="M1004 580l3 3h-2v4h4v-2l3 3-3 3v-2h-4v4h2l-3 3-3-3h2v-4h-4v2l-3-3 3-3v2h4v-4h-2z"/>
<path stroke="#3a6ea8" stroke-width="2.500" d="M1000 605a7 7 0 1 0 6 0"/><path fill="#3a6ea8" d="M997 603l6 0-2 6z"/>
<rect x="998" y="627" width="14" height="12" fill="#dfe6f2" stroke="#556"/><rect x="996.500" y="630.500" width="10" height="10" fill="#fff" stroke="#222" stroke-dasharray="1.500 1"/>
<path stroke="#222" d="M997.500 646V662H1003V646ZM1003 646L1011 662H1003" fill="#fff"/>

<!-- start flag -->
<g transform="translate(11 744) skewX(-6)"><rect width="7" height="7" fill="#e8502a"/><rect x="8" width="7" height="7" fill="#78c040"/><rect y="8" width="7" height="7" fill="#3a80e0"/><rect x="8" y="8" width="7" height="7" fill="#eec030"/></g>
<!-- task icons -->
<circle cx="123.500" cy="753.500" r="6" fill="#d8e8f8" stroke="#2c6cc0" stroke-width="1.500"/><path stroke="#2c6cc0" stroke-width="1.500" d="M119 753.500H128"/>
<path fill="#e8c860" stroke="#a08030" d="M277 749h5l2 2h8v3l-2 7H276Z"/><rect x="284" y="750" width="8" height="8" fill="#90b8d8"/>
<rect x="437" y="746" width="15" height="15" fill="#fff"/><path d="M439 748h8v6h-8z" fill="#222a80"/><path d="M444 752l6 2-2 4h-7z" fill="#d02020"/>
<path fill="#f0c030" stroke="#8a6010" d="M597 747h5l2 2h7v11h-14Z"/><path fill="#f8e080" d="M598 751h13v8h-13z"/>
<!-- tray -->
<rect x="903" y="750" width="14" height="9" fill="#eee" stroke="#222"/><path stroke="#333" stroke-dasharray="1 1" d="M905 753H915M905 756H915"/><path stroke="#ddd" d="M910 750c0-3 2-3 3-4"/>
<rect x="941" y="748" width="9" height="7" fill="#8899aa" stroke="#223"/><path stroke="#fff" d="M944 758h4"/><rect x="957" y="746" width="8" height="7" fill="#8899aa" stroke="#223"/><rect x="960" y="752" width="8" height="7" fill="#aab" stroke="#223"/><path stroke="#ee2020" stroke-width="2" d="M963 754L972 762M972 754L963 762"/><path stroke="#fff" d="M952 746a4 4 0 0 1 0 5M954 744a7 7 0 0 1 0 9"/>
<!-- status icon -->
<circle cx="971" cy="722" r="5" stroke="#444" fill="#c8d0d8"/><path stroke="#444" d="M971 727v3M966 731h10M966 718l10 8"/>
<path stroke="#bdbaa8" stroke-dasharray="1 2" d="M1006 730l8-8M1010 730l4-4"/>
</svg>
</div></body></html>
